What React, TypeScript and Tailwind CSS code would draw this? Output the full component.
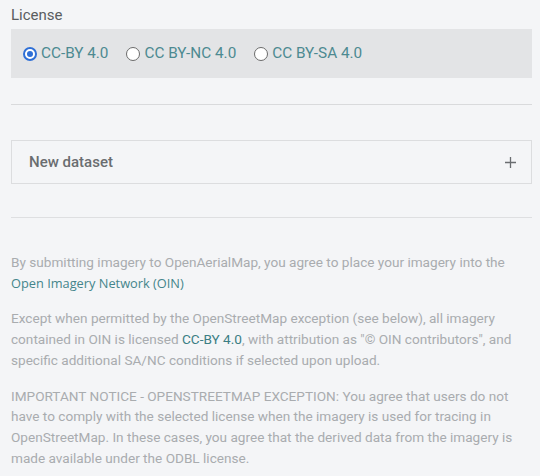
import React from "react";

function Radio({ checked, label }: { checked?: boolean; label: string }) {
  return (
    <label className="flex items-center gap-[4px]">
      {checked ? (
        <span className="flex h-[14px] w-[14px] items-center justify-center rounded-full border-[2px] border-[#2f6fd6] bg-white">
          <span className="h-[6px] w-[6px] rounded-full bg-[#2f6fd6]" />
        </span>
      ) : (
        <span className="h-[14px] w-[14px] rounded-full border-[1.5px] border-[#6b6b6b] bg-white" />
      )}
      <span className="text-[15.3px] text-[#4d8a91]">{label}</span>
    </label>
  );
}

export default function App() {
  return (
    <div
      className="h-[476px] w-[540px] overflow-hidden bg-[#f4f5f7] pl-[11px] pr-[8px]"
      style={{ fontFamily: "Roboto, 'Liberation Sans', sans-serif" }}
    >
      <div className="pt-[4px] text-[15px] leading-[22px] text-[#5a5d60]">License</div>
      <div className="mt-[3px] flex h-[49px] items-center gap-[18px] bg-[#e3e4e6] pl-[12px]">
        <Radio checked label="CC-BY 4.0" />
        <Radio label="CC BY-NC 4.0" />
        <Radio label="CC BY-SA 4.0" />
      </div>
      <div className="mt-[26px] h-px bg-[#d9dadc]" />
      <div className="mt-[35px] flex h-[44px] items-center justify-between border border-[#dcdddf] bg-[#f4f5f7] pl-[17px] pr-[14px]">
        <span className="text-[15px] font-medium text-[#6a6d70]">New dataset</span>
        <svg width="13" height="13" viewBox="0 0 13 13" className="text-[#6a6d70]">
          <path d="M6.5 1v11M1 6.5h11" stroke="currentColor" strokeWidth="1.3" />
        </svg>
      </div>
      <div className="mt-[33px] h-px bg-[#dedfe1]" />
      <div className="mt-[34px] pr-[8px] text-[13.6px] leading-[20.7px] text-[#a9acaf]">
        <p>
          By submitting imagery to OpenAerialMap, you agree to place your imagery into the{" "}
          <span className="text-[12.8px] text-[#44858b]" style={{ fontFamily: "'Open Sans', sans-serif" }}>
            Open Imagery Network (OIN)
          </span>
        </p>
        <p className="mt-[15px]">
          Except when permitted by the OpenStreetMap exception (see below), all imagery contained in OIN is licensed{" "}
          <span className="text-[#3b7e84]">CC-BY 4.0</span>, with attribution as "© OIN contributors", and specific additional SA/NC conditions if selected upon upload.
        </p>
        <p className="mt-[15px]">
          IMPORTANT NOTICE - OPENSTREETMAP EXCEPTION: You agree that users do not have to comply with the selected license when the imagery is used for tracing in OpenStreetMap. In these cases, you agree that the derived data from the imagery is made available under the ODBL license.
        </p>
      </div>
    </div>
  );
}
